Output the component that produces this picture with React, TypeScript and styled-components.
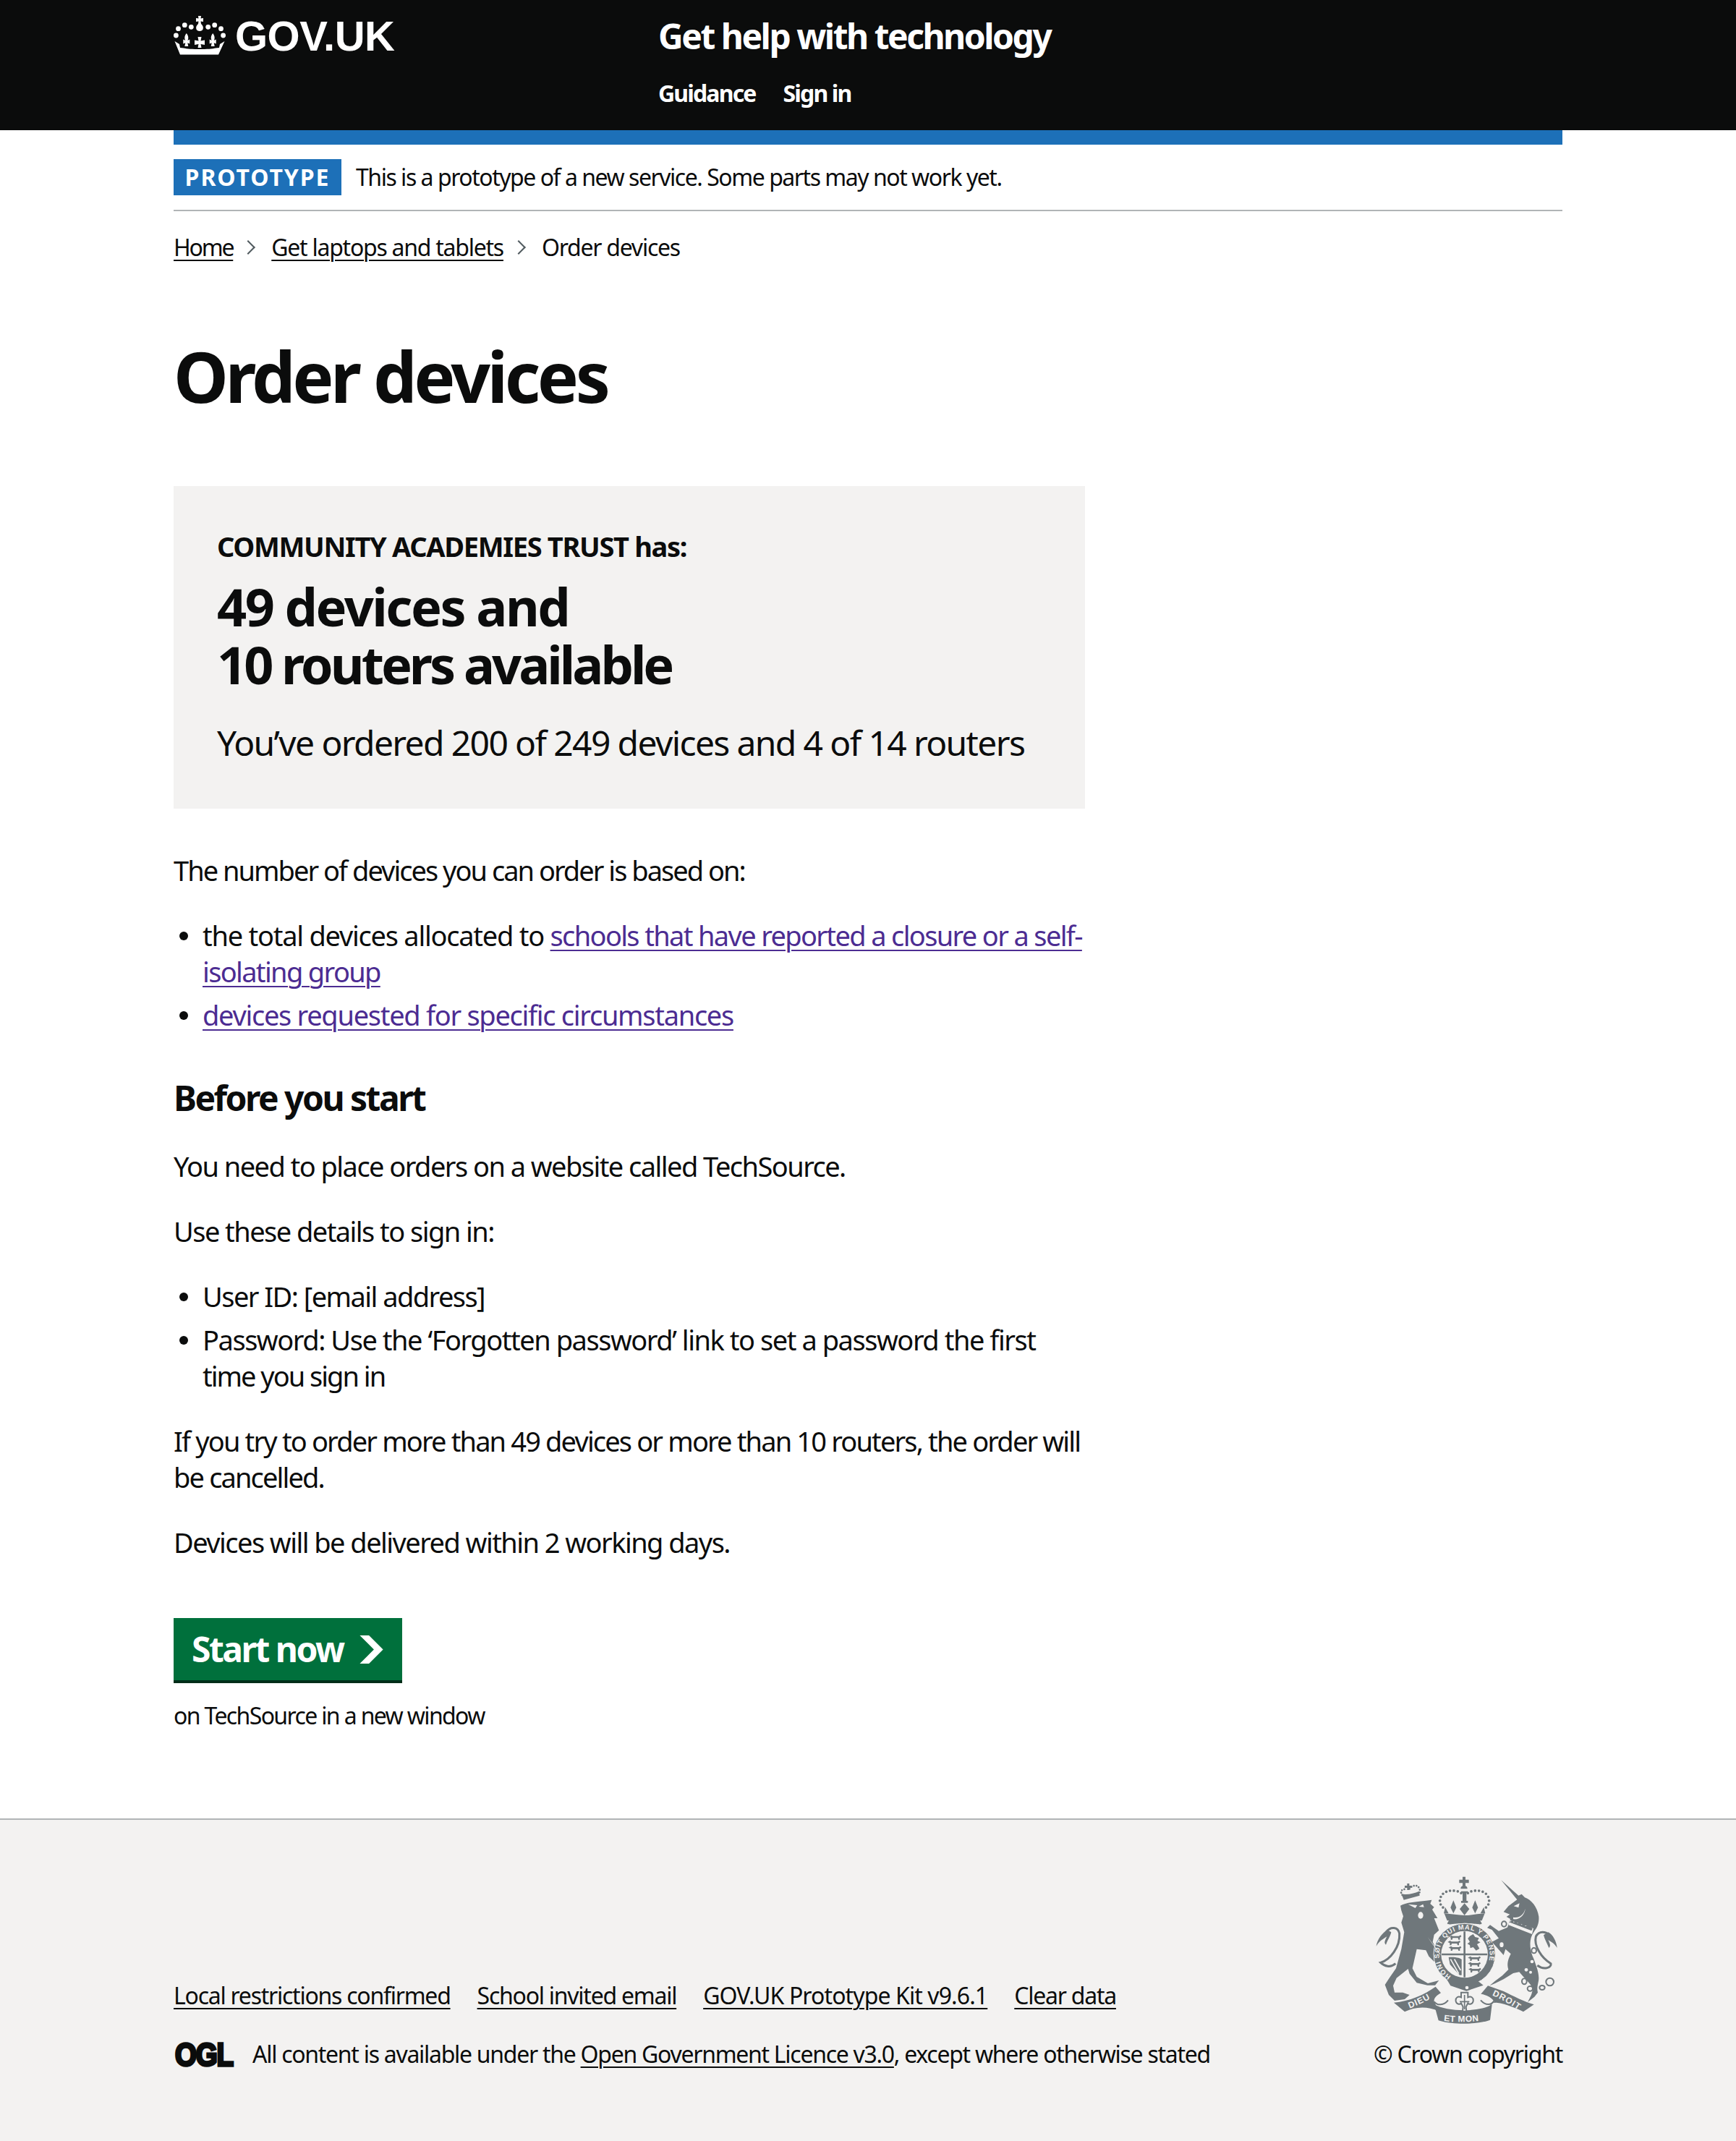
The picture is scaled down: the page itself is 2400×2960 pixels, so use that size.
import React from "react";
import styled, { createGlobalStyle } from "styled-components";

const Global = createGlobalStyle`
  html, body { margin: 0; padding: 0; background: #fff; }
  body { font-family: "Noto Sans", "Open Sans", Arial, sans-serif; color: #0b0c0c; }
  a { color: inherit; }
`;
const Page = styled.div`
  display: flex; flex-direction: column; min-height: 2960px;
  font-size: 38px; line-height: 50px; letter-spacing: -1.55px;
`;
const Track = styled.span<{ $ls: number }>`letter-spacing: ${p => p.$ls}px;`;
const Header = styled.header`
  background: #0b0c0c; color: #fff; height: 180px; padding: 0 240px; box-sizing: border-box; display: flex;
`;
const LogoCol = styled.div`
  width: 670px; display: flex; align-items: flex-start; gap: 13px; padding-top: 22px; box-sizing: border-box;
`;
const LogoText = styled.span`
  font-family: "Liberation Sans", Arial, sans-serif; font-weight: 700; font-size: 58px; line-height: 58px;
  letter-spacing: -0.5px; margin-top: -1px;
`;
const ServiceCol = styled.div`display: flex; flex-direction: column; padding-top: 20px;`;
const ServiceName = styled.div`font-weight: 700; font-size: 48px; line-height: 60px; letter-spacing: -2.5px;`;
const Nav = styled.nav`display: flex; gap: 38px; margin-top: 29px;`;
const NavLink = styled.a`font-weight: 700; font-size: 32px; line-height: 40px; letter-spacing: -1.85px; text-decoration: none;`;

const Container = styled.div`margin: 0 240px; width: 1920px;`;
const BlueBar = styled.div`height: 20px; background: #1d70b8;`;
const Phase = styled.div`
  display: flex; align-items: center; gap: 20px; padding: 20px 0; border-bottom: 2px solid #b1b4b6;
  font-size: 32px; line-height: 50px; letter-spacing: -1.47px;
`;
const Tag = styled.strong`
  background: #1d70b8; color: #fff; height: 50px; width: 232px; display: flex; align-items: center; justify-content: center;
  font-size: 32px; line-height: 50px; letter-spacing: 1.9px; text-transform: uppercase;
`;
const Crumbs = styled.div`
  display: flex; align-items: center; margin-top: 30px; font-size: 32px; line-height: 40px; letter-spacing: -1.25px;
`;
const Chevron = styled.span`
  width: 14px; height: 14px; border-top: 2px solid #505a5f; border-right: 2px solid #505a5f; transform: rotate(45deg);
  margin: 0 25px 0 14px; box-sizing: border-box;
`;
const TextLink = styled.a`text-decoration: underline; text-decoration-thickness: 2px; text-underline-offset: 5px;`;
const Visited = styled(TextLink)`color: #4c2c92;`;
const Main = styled.main`width: 1260px; padding-top: 108px;`;
const H1 = styled.h1`font-size: 96px; line-height: 100px; font-weight: 700; margin: 0 0 102px; letter-spacing: -4.46px;`;
const Panel = styled.div`background: #f3f2f1; padding: 60px; margin-bottom: 60px; box-sizing: border-box; height: 446px;`;
const PanelLead = styled.div`font-weight: 700; font-size: 38px; line-height: 50px; letter-spacing: -1.33px; margin-top: -2px;`;
const PanelBig = styled.div`font-weight: 700; font-size: 72px; line-height: 80px; margin-top: 18px; white-space: nowrap;`;
const PanelSub = styled.div`font-size: 48px; line-height: 60px; margin-top: 39px; letter-spacing: -1.63px; white-space: nowrap;`;
const P = styled.p`margin: 0 0 40px;`;
const List = styled.ul<{ $mb: number }>`
  list-style: none; margin: 0 0 ${p => p.$mb}px; padding: 0 0 0 40px;
`;
const Item = styled.li`
  position: relative; margin-bottom: 10px;
  &:last-child { margin-bottom: 0; }
  &::before {
    content: ""; position: absolute; left: -32px; top: 20px; width: 12px; height: 12px; border-radius: 50%; background: #0b0c0c;
  }
`;
const H2 = styled.h2`font-size: 48px; line-height: 60px; font-weight: 700; margin: 0 0 39px; letter-spacing: -2.53px;`;
const StartButton = styled.a`
  display: inline-flex; align-items: center; justify-content: space-between; margin-top: 40px; height: 86px; width: 316px; box-sizing: border-box;
  padding: 0 26px 0 25px; background: #00703c; color: #fff; font-weight: 700; font-size: 48px; line-height: 60px;
  letter-spacing: -2.5px; text-decoration: none; box-shadow: 0 4px 0 #002d18; white-space: nowrap;
`;
const Note = styled.p`font-size: 32px; line-height: 40px; margin: 29px 0 0; letter-spacing: -1.64px;`;
const Footer = styled.footer`
  margin-top: auto; background: #f3f2f1; border-top: 2px solid #b1b4b6; height: 446px; box-sizing: border-box;
  padding: 0 240px 100px; display: flex; justify-content: space-between; align-items: flex-end;
  font-size: 32px; line-height: 40px; letter-spacing: -1.25px;
`;
const FootLeft = styled.div`display: flex; flex-direction: column; gap: 41px;`;
const FootLinks = styled.div`display: flex; gap: 37px; margin-top: -1px;`;
const Licence = styled.div`display: flex; align-items: center; gap: 25px; letter-spacing: -1.28px;`;
const FootRight = styled.div`display: flex; flex-direction: column; align-items: flex-end;`;
const CrestWrap = styled.div`margin: 0 6px 22px 0; display: block; line-height: 0;`;
const Copyright = styled.a`text-decoration: none;`;

const Crown = () => (
  <svg width="72" height="54" viewBox="0 0 72 54" fill="#fff" aria-hidden="true">
    <path d="M34 0h4l-.5 3.500 3.500-.5v5l-3.500-.5.5 3.500c2.500 2 3.500 5 2.500 7.500-.8 1.600-1.800 2.500-4.500 2.500s-3.700-.9-4.500-2.500c-1-2.500 0-5.500 2.500-7.500l.5-3.500-3.500.5V3l3.500.5z" />
    <circle cx="3.400" cy="27" r="3.400" /><circle cx="6.500" cy="17.700" r="3.400" /><circle cx="15.300" cy="12.700" r="3.400" />
    <circle cx="24.300" cy="15.300" r="3.400" /><circle cx="47.700" cy="15.300" r="3.400" /><circle cx="56.700" cy="12.700" r="3.400" />
    <circle cx="65.500" cy="17.700" r="3.400" /><circle cx="68.600" cy="27" r="3.400" />
    <path d="M17.800 24c2 2.500 3 5 2.200 8.500l-.7 1.500 3-1.500v6l-3-1.200 1 4.700h-5l1-4.700-3 1.200v-6l3 1.500-.7-1.500c-.8-3.500.2-6 2.200-8.500z" />
    <path d="M33.500 29h5l-1 5.500 5.500-1v6.500l-5.500-1 1 5h-5l1-5-5.500 1v-6.500l5.500 1z" />
    <path d="M54.200 24c2 2.500 3 5 2.200 8.500l-.7 1.500 3-1.500v6l-3-1.200 1 4.700h-5l1-4.700-3 1.200v-6l3 1.500-.7-1.500c-.8-3.500.2-6 2.200-8.500z" />
    <path d="M1.500 35l6.500 4 1 5 5 .5c7 2 37 2 44 0l5-.5 1-5 6.500-4-8.500 18.500h-53z" />
  </svg>
);

const ink = "#6f777b";
const bg = "#f3f2f1";
const passant = "l10-6 6 4h26l8-4 3 6-6 4v9h-6l-2-7h-22l-2 7h-6v-9z";
const Crest = () => (
  <svg width="252" height="205" viewBox="130 105 756 615" aria-hidden="true">
    <defs>
      <path id="motto" d="M442 522A105 105 0 1 1 554 522" />
      <path id="dieu" d="M270 656C300 644 340 628 374 604" />
      <path id="etmon" d="M412 708C450 714 540 714 584 702" />
      <path id="droit" d="M612 602C650 618 690 640 726 666" />
      <clipPath id="shieldClip"><circle cx="498" cy="432" r="95" /></clipPath>
    </defs>
    <g fill={ink}>
      {/* lion crown */}
      <path d="M260 138h9v9h10v9h-10v9h-9v-9h-10v-9h10z" />
      <path d="M246 206l-10-26c20 8 50 0 74-10l2 18z" />
      <path fill="none" stroke={ink} strokeWidth="8" strokeLinecap="round" strokeDasharray="0 11" d="M240 186c-12-14 0-30 18-22M270 160c14-18 36-18 42 2 2 6 0 12-2 18" />
      {/* lion */}
      <path d="M232 230C252 216 300 214 362 206L356 222 372 236 364 246 386 282 372 282 392 332 372 350 366 380 386 420 398 450 372 462 350 440 338 415 300 410 282 490 300 525 346 552 392 540 376 560 344 560 300 550 270 512 264 492 216 530 202 562 208 590 242 590 270 600 250 618 208 624 184 600 168 558 186 530 214 490 236 410 248 340 236 300 244 274 236 250z" />
      {/* tail */}
      <path fill="none" stroke={ink} strokeWidth="9" d="M212 470C190 490 165 480 150 466 190 455 232 400 228 345 222 318 192 315 174 338" />
      <path d="M178 330C160 340 135 370 132 398 146 375 156 372 176 358 165 380 165 385 172 392 180 370 190 358 194 340z" />
      {/* royal crown */}
      <path d="M490 110h12v12h14v14h-14v12c6 2 8 6 8 12h-28c0-6 2-10 8-12v-12h-14v-14h14z" />
      <path d="M484 170h28v6h-6v34h6v8h-28v-8h6v-34h-6z" />
      <path d="M414 262c30 2 56 8 84 8s54-6 84-8l-12 30H426z" />
      <path d="M418 236l14 26h-20zM452 208l12 30-12 24-12-24zM498 220l20 24-20 26-20-26zM542 208l12 30-12 24-12-24zM578 236l6 26h-20z" />
      <path d="M434 290c40-10 90-10 128 0l8 14c-6 8-20 0-72-2-52 2-66 10-72 2z" />
      {/* garter ring and buckle */}
      <circle cx="498" cy="432" r="128" stroke={bg} strokeWidth="3" />
      <path d="M420 528l20 34 66 22 70-24-30-24z" />
      {/* ribbons */}
      <path d="M205 632C270 626 330 600 378 566L400 592C384 602 370 612 372 628L392 668C340 644 290 650 250 670z" />
      <path d="M372 640C430 672 560 672 612 640L604 704C550 724 446 724 390 706z" />
      <path d="M595 562L660 585C700 605 750 630 786 640L742 670C700 650 650 630 610 632L600 650 622 628C612 612 590 600 566 596z" />
      {/* unicorn */}
      <path d="M650 124L722 188 735 182 748 196C775 205 800 235 806 275 808 300 800 320 788 335L778 352C765 380 770 420 785 450 795 480 805 500 806 530 806 550 796 565 802 590L788 608 760 630 775 600 782 575C770 550 745 530 725 505L700 510 660 535 625 552 602 562 625 542 655 520 680 495C672 470 680 450 690 430L668 410 660 435 612 380 640 365 612 330 592 322 604 310 640 335 676 320 688 285 672 276 686 266 660 256 680 232 716 205z" />
      {/* unicorn tail */}
      <path fill="none" stroke={ink} strokeWidth="9" d="M800 478C830 500 860 485 856 470 815 445 785 395 794 358 808 332 835 338 850 352" />
      <path d="M845 340C865 350 880 380 882 405 870 385 860 382 845 372 855 392 855 398 848 405 840 385 830 370 826 352z" />
    </g>
    {/* royal crown arches of dots */}
    <g fill="none" stroke={ink} strokeWidth="11" strokeLinecap="round" strokeDasharray="0 16">
      <path d="M484 178C460 160 408 164 398 198 392 216 400 232 412 240" />
      <path d="M512 178C536 160 588 164 598 198 604 216 596 232 584 240" />
    </g>
    {/* fleur under the shield */}
    <path d="M484 590h28v20c12-6 24 0 22 16-2 12-16 16-22 8l-8 16 2 18h-16l2-18-8-16c-6 8-20 4-22-8-2-16 10-22 22-16z" fill={bg} stroke={ink} strokeWidth="6" />
    <path d="M498 600v60M478 628h40" stroke={ink} strokeWidth="5" fill="none" />
    {/* ribbon curls */}
    <path d="M372 628C385 645 412 645 430 622M622 622C610 645 585 645 565 622" fill="none" stroke={ink} strokeWidth="6" />
    {/* shield */}
    <circle cx="498" cy="432" r="97" fill={bg} />
    <g clipPath="url(#shieldClip)" fill={ink}>
      <path d="M408 338h182v100c0 48-48 84-92 104-44-20-90-56-90-104z" fill={bg} />
      <path d="M494 330h8v212h-8zM400 428h200v8H400z" />
      <path d={`M432 358${passant}M428 381${passant}M432 404${passant}`} />
      <path d="M520 356l14-8 8 12 16 4-6 12 12 6-14 8 10 18-14 8-12-14-12 4-2-12-10-6 10-8-8-14z" />
      <path d="M432 444c30-2 50 4 54 10v64h-8l-40-44z" />
      <path d="M440 452l34 60M456 452l26 46" stroke={bg} strokeWidth="5" />
      <path d={`M512 446${passant}M512 470${passant}M514 494${passant}`} />
    </g>
    {/* lion details */}
    <g fill={bg}>
      <path d="M264 224l38 4-8 12zM326 224l-18 10 22 2z" />
      <ellipse cx="316" cy="270" rx="11" ry="14" />
      <path d="M345 360l48 70 6 4-8-14z" />
    </g>
    {/* unicorn details */}
    <path d="M702 232l24-12-4 18zM700 278c24 4 44-10 50-36-2 24-22 48-50 44z" fill={bg} />
    <path d="M686 290l98 34-6 24-98-38z" fill={bg} />
    <path d="M686 296l12-6 4 10 10-8 6 12 10-6 6 12 12-6 4 12 12-4 18 12-4 10-94-36z" fill={ink} />
    <path d="M680 314l96 40" fill="none" stroke={ink} strokeWidth="6" />
    <g fill={bg} stroke={ink} strokeWidth="6">
      <ellipse cx="662" cy="306" rx="10" ry="11" />
      <ellipse cx="652" cy="392" rx="11" ry="13" />
      <ellipse cx="786" cy="416" rx="10" ry="11" />
      <ellipse cx="746" cy="544" rx="10" ry="12" />
      <ellipse cx="770" cy="574" rx="11" ry="10" />
      <ellipse cx="820" cy="570" rx="11" ry="9" />
      <ellipse cx="852" cy="546" rx="16" ry="16" />
    </g>
    <g fill={bg}>
      <circle cx="778" cy="462" r="7" /><circle cx="754" cy="496" r="7" /><circle cx="772" cy="506" r="6" />
      <circle cx="508" cy="570" r="7" />
    </g>
    <g fontFamily="'Liberation Sans', Arial, sans-serif" fontWeight="700" fill={bg}>
      <text fontSize="28" letterSpacing="2.6"><textPath href="#motto">HONI SOIT QUI MAL Y PENSE</textPath></text>
      <text fontSize="36" letterSpacing="3"><textPath href="#dieu">DIEU</textPath></text>
      <text fontSize="36" letterSpacing="1"><textPath href="#etmon">ET MON</textPath></text>
      <text fontSize="36" letterSpacing="3"><textPath href="#droit">DROIT</textPath></text>
    </g>
  </svg>
);

const OglSvg = styled.svg`overflow: visible; flex: none;`;
const Ogl = () => (
  <OglSvg width="84" height="34" viewBox="0 0 84 34" aria-hidden="true">
    <text x="2" y="32.500" fontFamily="'Liberation Sans', Arial, sans-serif" fontWeight="700" fontSize="45" fill="#0b0c0c" stroke="#0b0c0c" strokeWidth="3.500" textLength="80" lengthAdjust="spacingAndGlyphs">OGL</text>
  </OglSvg>
);

export default function App() {
  return (
    <Page>
      <Global />
      <Header>
        <LogoCol>
          <Crown />
          <LogoText>GOV.UK</LogoText>
        </LogoCol>
        <ServiceCol>
          <ServiceName>Get help with technology</ServiceName>
          <Nav>
            <NavLink href="#">Guidance</NavLink>
            <NavLink href="#">Sign in</NavLink>
          </Nav>
        </ServiceCol>
      </Header>
      <Container>
        <BlueBar />
        <Phase>
          <Tag>Prototype</Tag>
          <span>This is a prototype of a new service. Some parts may not work yet.</span>
        </Phase>
        <Crumbs>
          <TextLink href="#"><Track $ls={-2.2}>Home</Track></TextLink>
          <Chevron />
          <TextLink href="#">Get laptops and tablets</TextLink>
          <Chevron />
          <span>Order devices</span>
        </Crumbs>
        <Main>
          <H1>Order devices</H1>
          <Panel>
            <PanelLead>COMMUNITY ACADEMIES TRUST has:</PanelLead>
            <PanelBig><Track $ls={-2.5}>49 devices and</Track><br /><Track $ls={-4}>10 routers available</Track></PanelBig>
            <PanelSub>You’ve ordered 200 of 249 devices and 4 of 14 routers</PanelSub>
          </Panel>
          <P><Track $ls={-1.98}>The number of devices you can order is based on:</Track></P>
          <List $mb={60}>
            <Item><Track $ls={-1.25}>the total devices allocated to </Track><Visited href="#"><Track $ls={-1.65}>schools that have reported a closure or a self-isolating group</Track></Visited></Item>
            <Item><Visited href="#"><Track $ls={-1.29}>devices requested for specific circumstances</Track></Visited></Item>
          </List>
          <H2>Before you start</H2>
          <P>You need to place orders on a website called TechSource.</P>
          <P>Use these details to sign in:</P>
          <List $mb={40}>
            <Item>User ID: [email address]</Item>
            <Item><Track $ls={-1.46}>Password: Use the ‘Forgotten password’ link to set a password the first </Track><Track $ls={-2}>time you sign in</Track></Item>
          </List>
          <P><Track $ls={-1.85}>If you try to order more than 49 devices or more than 10 routers, the order will be cancelled.</Track></P>
          <P>Devices will be delivered within 2 working days.</P>
          <StartButton href="#">
            Start now
            <svg width="33" height="39" viewBox="0 0 33 40" fill="#fff" aria-hidden="true"><path d="M0 0h13l20 20-20 20H0l20-20z" /></svg>
          </StartButton>
          <Note>on TechSource in a new window</Note>
        </Main>
      </Container>
      <Footer>
        <FootLeft>
          <FootLinks>
            <TextLink href="#">Local restrictions confirmed</TextLink>
            <TextLink href="#">School invited email</TextLink>
            <TextLink href="#"><Track $ls={-0.9}>GOV.UK Prototype Kit v9.6.1</Track></TextLink>
            <TextLink href="#">Clear data</TextLink>
          </FootLinks>
          <Licence>
            <Ogl />
            <span>All content is available under the <TextLink href="#">Open Government Licence v3.0</TextLink>, except where otherwise stated</span>
          </Licence>
        </FootLeft>
        <FootRight>
          <CrestWrap><Crest /></CrestWrap>
          <Copyright href="#">© Crown copyright</Copyright>
        </FootRight>
      </Footer>
    </Page>
  );
}
